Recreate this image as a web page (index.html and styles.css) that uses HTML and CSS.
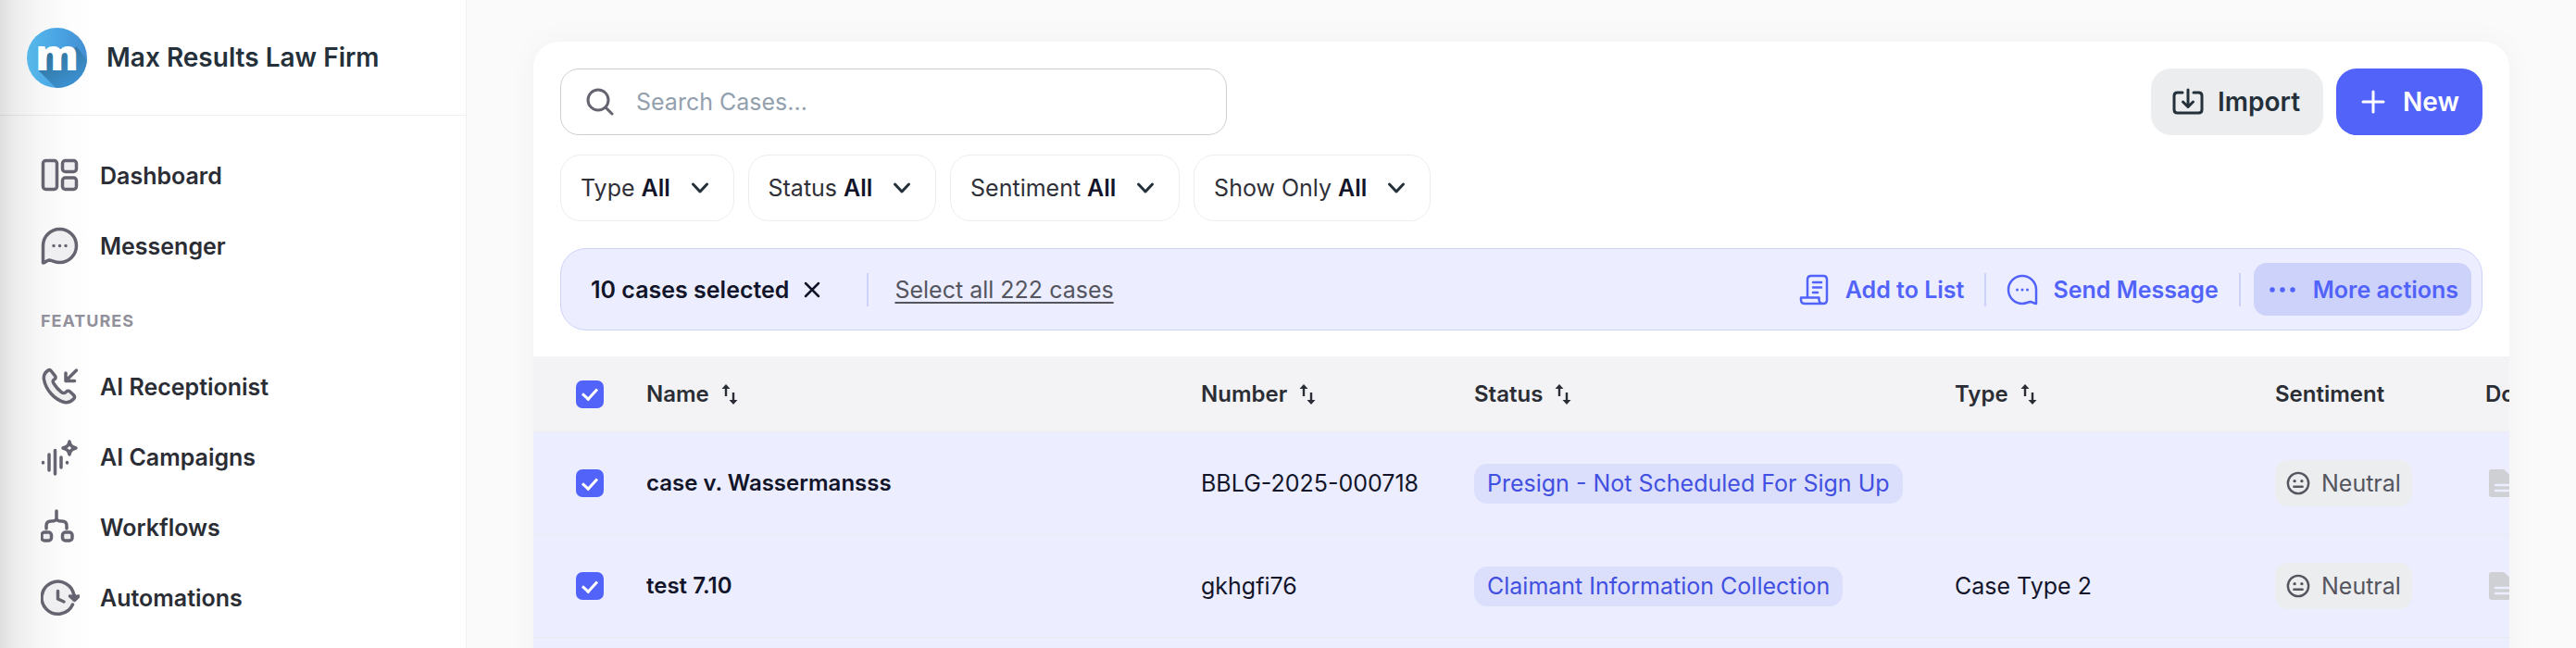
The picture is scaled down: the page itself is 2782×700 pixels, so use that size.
FILE: index.html
```html
<!DOCTYPE html>
<html lang="en">
<head>
    <meta charset="UTF-8">
    <meta name="viewport" content="width=device-width, initial-scale=1.0">
    <title>Cases</title>
    <link rel="stylesheet" href="styles.css">
</head>

<body>

<!-- Shared icons -->
<svg class="sprite" aria-hidden="true">
    <symbol id="i-chevron" viewBox="0 0 20 20"><path d="M2.500 6l7.500 8 7.500-8" fill="none" stroke="currentColor" stroke-width="3" stroke-linecap="round" stroke-linejoin="round"/></symbol>
    <symbol id="i-sort" viewBox="0 0 18 24">
        <path d="M5 14V3M13 10v11" fill="none" stroke="currentColor" stroke-width="2.400"/>
        <path d="M5 1L9.500 6h-9zM13 23l-4.500-5h9z" fill="currentColor"/>
    </symbol>
    <symbol id="i-neutral" viewBox="0 0 28 28">
        <circle cx="14" cy="14" r="12" fill="none" stroke="currentColor" stroke-width="2.600"/>
        <circle cx="9.800" cy="11.500" r="1.800" fill="currentColor"/><circle cx="18.200" cy="11.500" r="1.800" fill="currentColor"/>
        <path d="M9 18h10" stroke="currentColor" stroke-width="2.600" stroke-linecap="round"/>
    </symbol>
    <symbol id="i-doc" viewBox="0 0 30 30">
        <path d="M3 0h13l12 11v16a3 3 0 0 1-3 3H3a3 3 0 0 1-3-3V3a3 3 0 0 1 3-3z" fill="#cfd0d4"/>
        <path d="M7 17h14M7 23h14" stroke="#eceeff" stroke-width="2.600" stroke-linecap="round"/>
    </symbol>
</svg>

<div class="app">

    <aside class="sidebar">
        <div class="brand">
            <svg class="brand-logo" viewBox="0 0 64 64" role="img" aria-label="Logo">
                <defs>
                    <linearGradient id="logoBg"><stop offset="0" stop-color="#58b9ea"/><stop offset="0.500" stop-color="#4aa5e4"/><stop offset="1" stop-color="#438fd2"/></linearGradient>
                    <linearGradient id="logoShade" x1="0" y1="0" x2="0.700" y2="1"><stop offset="0" stop-color="#2d6c8e"/><stop offset="1" stop-color="#3d93d6"/></linearGradient>
                </defs>
                <circle cx="32" cy="32" r="32" fill="url(#logoBg)"/>
                <path d="M12.500 45.500L20 22h30l3-2 11 14.500A32 32 0 0 1 31 64z" fill="url(#logoShade)"/>
                <text x="32" y="45" text-anchor="middle" class="brand-mark">m</text>
            </svg>
            <span class="brand-name">Max Results Law Firm</span>
        </div>

        <nav class="nav">
            <a class="nav-item" href="#">
                <svg class="nav-icon" viewBox="0 0 42 42"><rect x="2.500" y="4.500" width="15" height="31" rx="3"/><rect x="23.500" y="4.500" width="15" height="12" rx="3"/><rect x="23.500" y="23" width="15" height="12.500" rx="3"/></svg>
                Dashboard
            </a>
            <a class="nav-item" href="#">
                <svg class="nav-icon" viewBox="0 0 42 42"><path d="M2.500 39V20.500a18 18 0 1 1 18 18c-5 0-7.500-2-11-2.500-3-.2-4 3-7 3z"/><path class="dots" d="M14 20.500h.01M20.500 20.500h.01M27 20.500h.01"/></svg>
                Messenger
            </a>

            <h2 class="nav-title">FEATURES</h2>

            <a class="nav-item" href="#">
                <svg class="nav-icon" viewBox="0 0 42 42"><path d="M8 3C4.500 5.500 2.500 8 3.500 13c2 11 11 21.500 22 24.500 4 1.200 7-.5 10-3.500 1.500-1.500 1.200-3-.2-4.500L31.500 26c-1.500-1.300-3-1-4 .3-1.500 2-3.500 1.500-5.500 0-3-2.300-5.500-5-8-9-1.300-2-1-3.500.8-4.500 1.500-1 1.700-2.500.5-4L11.500 4C10.500 2.700 9.500 2 8 3z"/><path class="line" d="M38.500 3L27 14.500M27 6v8.500h9.500"/></svg>
                AI Receptionist
            </a>
            <a class="nav-item" href="#">
                <svg class="nav-icon" viewBox="0 0 42 42"><path class="line" d="M2.500 26.500v.5M9 18v17M15.500 13.500V39M22 21v11M28.500 26.500v.5"/><path class="star" d="M31 4c.8 4 2 5.500 7 7-5 1.500-6.200 3-7 7-.8-4-2-5.500-7-7 5-1.500 6.200-3 7-7z"/></svg>
                AI Campaigns
            </a>
            <a class="nav-item" href="#">
                <svg class="nav-icon" viewBox="0 0 42 42"><path class="line" d="M17 3v9M6 22v-3c0-4 2-5 5-5 3.500 0 6-.5 6-3 0 2.500 2.500 3 6 3 3 0 5 1 5 5v3"/><rect x="1" y="26" width="10.500" height="9" rx="3"/><rect x="23.500" y="26" width="10.500" height="9" rx="3"/></svg>
                Workflows
            </a>
            <a class="nav-item" href="#">
                <svg class="nav-icon" viewBox="0 0 42 42"><path d="M34.500 28A17.500 17.500 0 1 1 36 19"/><path class="line" d="M18.500 13.500v8.500l6.500 3M36.500 21v-3"/><path class="solid" d="M31.500 19l5 4.500 4.500-4.500-4.500 1z"/></svg>
                Automations
            </a>
        </nav>
    </aside>

    <main class="content">
        <section class="card">

            <div class="toolbar">
                <label class="search">
                    <svg class="search-icon" viewBox="0 0 30 30"><circle cx="13" cy="13" r="11" fill="none" stroke="currentColor" stroke-width="3"/><path d="M21 21l7 7" stroke="currentColor" stroke-width="3" stroke-linecap="round"/></svg>
                    <input type="text" placeholder="Search Cases..." aria-label="Search Cases">
                </label>
                <div class="toolbar-buttons">
                    <button type="button" class="btn btn-import">
                        <svg class="btn-icon" viewBox="0 0 34 30"><path d="M11 5H5.500C3 5 2 6 2 8.500v15C2 26 3 27 5.500 27h23c2.500 0 3.500-1 3.500-3.500v-15C32 6 31 5 28.500 5H23M17 2v18M11.500 15l5.500 5.500 5.500-5.500"/></svg>
                        Import
                    </button>
                    <button type="button" class="btn btn-new">
                        <svg class="btn-icon" viewBox="0 0 34 30"><path d="M17 4v22M6 15h22"/></svg>
                        New
                    </button>
                </div>
            </div>

            <div class="filters">
                <label class="filter">Type <select><option>All</option></select><svg class="chevron"><use href="#i-chevron"/></svg></label>
                <label class="filter">Status <select><option>All</option></select><svg class="chevron"><use href="#i-chevron"/></svg></label>
                <label class="filter">Sentiment <select><option>All</option></select><svg class="chevron"><use href="#i-chevron"/></svg></label>
                <label class="filter">Show Only <select><option>All</option></select><svg class="chevron"><use href="#i-chevron"/></svg></label>
            </div>

            <div class="selection">
                <span class="selection-count">10 cases selected</span>
                <button type="button" class="selection-clear" aria-label="Clear selection">
                    <svg viewBox="0 0 18 18"><path d="M2 2l14 14M16 2L2 16" stroke="currentColor" stroke-width="2.500" stroke-linecap="round"/></svg>
                </button>
                <span class="divider"></span>
                <a class="selection-all" href="#">Select all 222 cases</a>

                <div class="actions">
                    <button type="button" class="action">
                        <svg class="action-icon" viewBox="0 0 34 34"><path d="M9 25V6c0-2.500 1.500-4 4-4h13c2.500 0 4 1.500 4 4v22c0 2.500-1.500 4-4 4M26 32H6c-2.500 0-4-1.500-4-4v-2.500h19.500V28c0 2.500 2 4 4.500 4M15 9h9M15 14.500h9M15 20h5"/></svg>
                        Add to List
                    </button>
                    <span class="divider"></span>
                    <button type="button" class="action">
                        <svg class="action-icon" viewBox="0 0 34 34"><path d="M32 32V17a15 15 0 1 0-15 15c4 0 6-1.500 8.500-2 2.500-.2 3.500 2 6.500 2z"/><path class="dots" d="M11.500 17h.01M17 17h.01M22.500 17h.01"/></svg>
                        Send Message
                    </button>
                    <span class="divider"></span>
                    <button type="button" class="action action-more">
                        <svg class="action-icon" viewBox="0 0 34 34"><path class="dots-big" d="M6 17h.01M17 17h.01M28 17h.01"/></svg>
                        More actions
                    </button>
                </div>
            </div>

            <div class="table-wrap">
                <table class="cases">
                    <colgroup>
                        <col class="col-check"><col class="col-name"><col class="col-number"><col class="col-status"><col class="col-type"><col class="col-sentiment"><col class="col-docs">
                    </colgroup>
                    <thead>
                        <tr>
                            <th class="check"><input type="checkbox" aria-label="Select all" checked></th>
                            <th>Name <svg class="sort"><use href="#i-sort"/></svg></th>
                            <th>Number <svg class="sort"><use href="#i-sort"/></svg></th>
                            <th>Status <svg class="sort"><use href="#i-sort"/></svg></th>
                            <th>Type <svg class="sort"><use href="#i-sort"/></svg></th>
                            <th>Sentiment</th>
                            <th>Documents</th>
                        </tr>
                    </thead>
                    <tbody>
                        <tr>
                            <td class="check"><input type="checkbox" aria-label="Select case v. Wassermansss" checked></td>
                            <td class="name">case v. Wassermansss</td>
                            <td>BBLG-2025-000718</td>
                            <td><span class="status">Presign - Not Scheduled For Sign Up</span></td>
                            <td></td>
                            <td><span class="sentiment"><svg><use href="#i-neutral"/></svg>Neutral</span></td>
                            <td><svg class="doc"><use href="#i-doc"/></svg></td>
                        </tr>
                        <tr>
                            <td class="check"><input type="checkbox" aria-label="Select test 7.10" checked></td>
                            <td class="name">test 7.10</td>
                            <td>gkhgfi76</td>
                            <td><span class="status">Claimant Information Collection</span></td>
                            <td>Case Type 2</td>
                            <td><span class="sentiment"><svg><use href="#i-neutral"/></svg>Neutral</span></td>
                            <td><svg class="doc"><use href="#i-doc"/></svg></td>
                        </tr>
                        <tr>
                            <td></td>
                            <td></td>
                            <td></td>
                            <td></td>
                            <td></td>
                            <td></td>
                            <td></td>
                        </tr>
                    </tbody>
                </table>
            </div>

        </section>
    </main>

</div>

</body>
</html>
```
FILE: styles.css
```css
* {
    box-sizing: border-box;
}

body {
    margin: 0;
    font-family: Inter, "Liberation Sans", sans-serif;
    font-size: 25px;
    line-height: 32px;
    color: #12152a;
    background-color: #fafafa;
}

button, input, select {
    font: inherit;
    color: inherit;
}

button {
    border: none;
    cursor: pointer;
}

.sprite {
    display: none;
}

.app {
    display: flex;
    height: 100vh;
    overflow: hidden;
}

/* Sidebar */
.sidebar {
    width: 504px;
    flex-shrink: 0;
    border-right: 1px solid #f0f0f1;
    background: linear-gradient(to right, #dedede, #ececec 16px, #f6f6f6 40px, #fcfcfc 70px, #fff 100px);
}

.brand {
    display: flex;
    align-items: center;
    gap: 21px;
    height: 125px;
    padding-left: 29px;
    border-bottom: 1px solid rgba(0, 0, 0, 0.06);
}

.brand-logo {
    width: 65px;
    height: 65px;
    overflow: visible;
}

.brand-mark {
    font-family: "Open Sans", sans-serif;
    font-size: 46px;
    font-weight: 800;
    fill: #fff;
}

.brand-name {
    font-size: 28px;
    font-weight: 600;
    color: #24303a;
}

.nav {
    padding-top: 27px;
}

.nav-item {
    display: flex;
    align-items: center;
    gap: 22px;
    height: 76px;
    padding-left: 44px;
    font-weight: 600;
    color: #2b2d35;
    text-decoration: none;
}

.nav-icon {
    width: 42px;
    height: 42px;
    fill: #efeff2;
    stroke: #656470;
    stroke-width: 3.500;
    stroke-linecap: round;
    stroke-linejoin: round;
}

.nav-icon .line {
    fill: none;
}

.nav-icon .solid {
    fill: #656470;
}

.nav-icon .star {
    fill: #fff;
}

.nav-title {
    margin: 0;
    height: 76px;
    padding: 27px 0 0 44px;
    font-size: 18px;
    font-weight: 700;
    letter-spacing: 1px;
    color: #91909b;
}

/* Content */
.content {
    flex: 1;
    min-width: 0;
    padding: 45px 72px 0;
}

.card {
    min-height: 100%;
    padding-top: 29px;
    border-radius: 28px 28px 0 0;
    background-color: #fff;
    box-shadow: 0 0 32px rgba(0, 0, 0, 0.04);
}

.toolbar {
    display: flex;
    justify-content: space-between;
    padding: 0 29px;
}

.search {
    display: flex;
    align-items: center;
    gap: 24px;
    width: 720px;
    height: 72px;
    padding: 0 27px;
    border: 1px solid #cfcfd3;
    border-radius: 20px;
}

.search-icon {
    width: 30px;
    height: 30px;
    flex-shrink: 0;
    color: #656470;
}

.search input {
    flex: 1;
    min-width: 0;
    padding: 0;
    border: none;
    outline: none;
    background: none;
}

.search input::placeholder {
    color: #93a0ae;
}

.toolbar-buttons {
    display: flex;
    gap: 14px;
}

.btn {
    display: flex;
    align-items: center;
    gap: 15px;
    height: 72px;
    padding: 0 25px 0 23px;
    border-radius: 22px;
    font-size: 28px;
    font-weight: 600;
}

.btn-icon {
    width: 34px;
    height: 30px;
    fill: none;
    stroke: currentColor;
    stroke-width: 3;
    stroke-linecap: round;
    stroke-linejoin: round;
}

.btn-import {
    background-color: #ecedef;
    color: #24303a;
}

.btn-new {
    background-color: #5263fa;
    color: #fff;
}

/* Filters */
.filters {
    display: flex;
    gap: 15px;
    padding: 21px 29px 0;
}

.filter {
    display: flex;
    align-items: center;
    gap: 7px;
    height: 72px;
    padding: 0 26px 0 21px;
    border: 1px solid #ededee;
    border-radius: 22px;
    color: #2f3038;
}

.filter select {
    appearance: none;
    padding: 0;
    border: none;
    background: none;
    font-weight: 600;
    color: #12152a;
}

.chevron {
    width: 20px;
    height: 20px;
    margin-left: 14px;
    color: #24303a;
}

/* Selection bar */
.selection {
    display: flex;
    align-items: center;
    height: 89px;
    margin: 29px 29px 28px;
    padding: 0 11px 0 32px;
    border: 1px solid #cdd2fb;
    border-radius: 28px;
    background-color: #eceeff;
}

.selection-count {
    font-weight: 600;
}

.selection-clear {
    display: flex;
    margin: 0 50px 0 16px;
    padding: 0;
    background: none;
}

.selection-clear svg {
    width: 18px;
    height: 18px;
}

.divider {
    width: 2px;
    height: 36px;
    background-color: #cdd2fb;
}

.selection-all {
    margin-left: 28px;
    color: #54555f;
    text-underline-offset: 4px;
}

.actions {
    display: flex;
    align-items: center;
    margin-left: auto;
}

.action {
    display: flex;
    align-items: center;
    gap: 16px;
    height: 57px;
    padding: 0 22px;
    border-radius: 14px;
    background: none;
    font-weight: 600;
    color: #5263fa;
}

.action-more {
    margin-left: 14px;
    padding: 0 14px;
    background-color: #cdd2fb;
}

.action-icon {
    width: 34px;
    height: 34px;
    fill: none;
    stroke: currentColor;
    stroke-width: 2.500;
    stroke-linecap: round;
    stroke-linejoin: round;
}

.action-icon .dots {
    stroke-width: 3;
}

.action-icon .dots-big {
    stroke-width: 5.500;
}

/* Table */
.table-wrap {
    overflow: hidden;
}

.cases {
    width: calc(100% + 150px);
    table-layout: fixed;
    border-collapse: separate;
    border-spacing: 0;
}

.col-check {
    width: 107px;
}

.col-number {
    width: 295px;
}

.col-status {
    width: 519px;
}

.col-type {
    width: 346px;
}

.col-sentiment {
    width: 227px;
}

.col-docs {
    width: 191px;
}

.cases th, .cases td {
    padding: 0 15px;
    border-bottom: 1px solid #e9ebf2;
    text-align: left;
    white-space: nowrap;
}

.cases th {
    height: 82px;
    background-color: #f3f3f5;
    font-size: 24px;
    font-weight: 600;
    color: #2b2d35;
}

.cases td {
    height: 111px;
    background-color: #eceeff;
}

.cases .check {
    padding-left: 46px;
}

.cases .name {
    font-size: 24px;
    font-weight: 600;
}

.cases input[type="checkbox"] {
    appearance: none;
    display: flex;
    align-items: center;
    justify-content: center;
    width: 30px;
    height: 30px;
    margin: 0;
    border-radius: 7px;
    background-color: #5263fa;
}

.cases input[type="checkbox"]::after {
    content: "";
    width: 13px;
    height: 7px;
    margin-bottom: 3px;
    border-left: 3px solid #fff;
    border-bottom: 3px solid #fff;
    transform: rotate(-48deg);
}

.sort {
    width: 18px;
    height: 24px;
    margin-left: 7px;
    vertical-align: -4px;
}

.status {
    display: inline-block;
    height: 43px;
    padding: 0 14px;
    border-radius: 14px;
    background-color: #dcdffc;
    line-height: 43px;
    color: #4150e0;
}

.sentiment {
    display: inline-flex;
    align-items: center;
    gap: 12px;
    height: 50px;
    padding: 0 12px;
    border-radius: 14px;
    background-color: #ecedef;
    color: #54555f;
    vertical-align: middle;
}

.sentiment svg {
    width: 26px;
    height: 26px;
}

.doc {
    display: block;
    width: 30px;
    height: 30px;
    margin-left: 4px;
}
```
